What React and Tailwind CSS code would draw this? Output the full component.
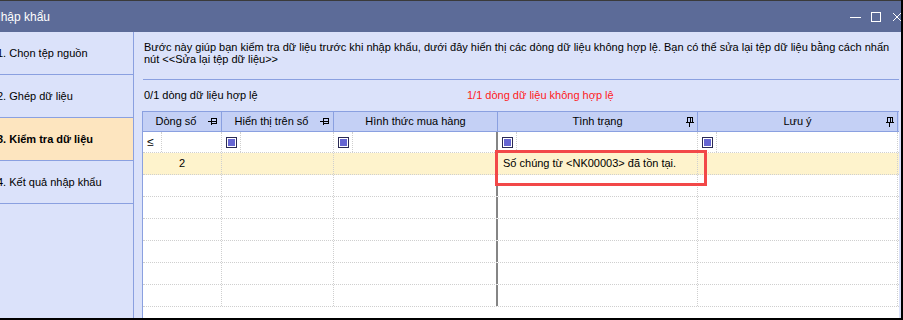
import React from "react";

const HPin = () => (
  <svg width="10" height="8" viewBox="0 0 10 8" className="block">
    <path d="M0 4.5H3.5M3.5 0.5V7.5M3.5 1.5H8.5V6.5H3.5M3.5 4.5H8.5" stroke="#000" strokeWidth="1" fill="none" shapeRendering="crispEdges" />
  </svg>
);

const VPin = () => (
  <svg width="8" height="10" viewBox="0 0 8 10" className="block">
    <path d="M1.5 0.5H6.5V5.5H1.5ZM4.5 0.5V5.5M0 5.5H8M3.5 5.5V10" stroke="#000" strokeWidth="1" fill="none" shapeRendering="crispEdges" />
  </svg>
);

const FilterBox = () => (
  <div className="w-[11px] h-[11px] border border-[#2b2b55] bg-white flex items-center justify-center">
    <div className="w-[7px] h-[7px] bg-[#6565d2]" />
  </div>
);

const cols = ["w-[79px]", "w-[112px]", "w-[164px]", "w-[200px]", "w-[200px]"];

function BodyRow({ yellow, children }) {
  return (
    <div className={`flex h-[22px] border-b border-dotted border-[#cfcfcf] ${yellow ? "bg-[#fef3cc]" : "bg-white"}`}>
      {cols.map((w, i) => (
        <div
          key={i}
          className={`${w} h-full shrink-0 flex items-center ${
            i === 2 ? "border-r-2 border-solid border-[#858585]" : "border-r border-dotted border-[#cfcfcf]"
          }`}
        >
          {children ? children[i] : null}
        </div>
      ))}
    </div>
  );
}

export default function App() {
  const font = { fontFamily: '"Liberation Sans", Arial, sans-serif' };
  return (
    <div
      className="w-[903px] h-[320px] overflow-hidden bg-[#dbe2fa] border-r-2 border-b-2 border-black text-[11px] text-black flex flex-col"
      style={font}
    >
      {/* Title bar */}
      <div className="h-[32px] shrink-0 bg-[#5c6b98] border-t border-[#3a3a3a] flex items-center text-white">
        <div className="-ml-[8px] text-[12px]">Nhập khẩu</div>
        <div className="ml-auto flex items-center h-full">
          <div className="w-[11px] h-px bg-white mr-[10px] mt-[1px]" />
          <div className="w-[10px] h-[10px] border border-white mr-[12px]" />
          <svg width="8" height="10" viewBox="0 0 8 10" className="block">
            <path d="M0 0L8 8M8 0L0 8" stroke="#fff" strokeWidth="1" transform="translate(0,1)" />
          </svg>
        </div>
      </div>

      <div className="flex flex-1 min-h-0">
        {/* Sidebar */}
        <div className="w-[134px] shrink-0 border-r border-[#8aa0e0] flex flex-col">
          <div className="h-[43px] border-b border-[#8aa0e0] flex items-center">
            <span className="-ml-[3px]">1. Chọn tệp nguồn</span>
          </div>
          <div className="h-[43px] border-b border-[#8aa0e0] flex items-center">
            <span className="-ml-[3px]">2. Ghép dữ liệu</span>
          </div>
          <div className="h-[43px] border-b border-[#8aa0e0] bg-[#fde5bf] flex items-center">
            <span className="-ml-[3px] font-bold">3. Kiểm tra dữ liệu</span>
          </div>
          <div className="h-[43px] border-b border-[#8aa0e0] flex items-center">
            <span className="-ml-[3px]">4. Kết quả nhập khẩu</span>
          </div>
        </div>

        {/* Content */}
        <div className="flex-1 min-w-0 pl-[8px] pr-[2px] pt-[9px] flex flex-col">
          <div className="pl-[2px] leading-[12px] whitespace-nowrap">
            Bước này giúp bạn kiểm tra dữ liệu trước khi nhập khẩu, dưới đây hiển thị các dòng dữ liệu không hợp lệ. Bạn có thể sửa lại tệp dữ liệu bằng cách nhấn
            <br />
            nút &lt;&lt;Sửa lại tệp dữ liệu&gt;&gt;
          </div>
          <div className="mt-[14px] h-px bg-[#8aa0e0] ml-[1px]" />
          <div className="mt-[9px] pl-[2px] flex leading-[12px] whitespace-nowrap">
            <span className="w-[323px] shrink-0">0/1 dòng dữ liệu hợp lệ</span>
            <span className="text-[#ff1a1a]">1/1 dòng dữ liệu không hợp lệ</span>
          </div>

          {/* Grid */}
          <div className="mt-[10px] relative flex-1 border-l border-t border-[#8aa0e0] bg-white w-[757px]">
            {/* header */}
            <div className="flex h-[20px] bg-[#c4d0f5] border-b border-[#8aa0e0]">
              {[
                { t: "Dòng số", pin: <HPin /> },
                { t: "Hiển thị trên sổ", pin: <HPin /> },
                { t: "Hình thức mua hàng" },
                { t: "Tình trạng", pin: <VPin /> },
                { t: "Lưu ý", pin: <VPin /> },
              ].map((c, i) => (
                <div key={i} className={`${cols[i]} shrink-0 relative flex items-center justify-center border-r border-[#8aa0e0]`}>
                  <span className={i < 2 ? "pr-[12px]" : ""}>{c.t}</span>
                  {c.pin && <div className="absolute right-[3px] top-[5px]">{c.pin}</div>}
                </div>
              ))}
            </div>
            {/* filter row */}
            <div className="flex h-[21px] bg-white border-b border-dotted border-[#cfcfcf]">
              {cols.map((w, i) => (
                <div
                  key={i}
                  className={`${w} shrink-0 flex ${
                    i === 2 ? "border-r-2 border-solid border-[#858585]" : "border-r border-dotted border-[#cfcfcf]"
                  }`}
                >
                  <div className="w-[19px] h-full border-r border-dotted border-[#cfcfcf] flex items-center justify-center">
                    {i === 0 ? (
                      <span className="text-[12px] leading-none -ml-[3px]">≤</span>
                    ) : (
                      <FilterBox />
                    )}
                  </div>
                </div>
              ))}
            </div>
            <BodyRow
              yellow
              children={[
                <span className="w-full text-right pr-[36px]">2</span>,
                null,
                null,
                <span className="pl-[5px]">Số chúng từ &lt;NK00003&gt; đã tồn tại.</span>,
                null,
              ]}
            />
            <BodyRow />
            <BodyRow />
            <BodyRow />
            <BodyRow />
            <BodyRow />
            <BodyRow />
            {/* red highlight box */}
            <div className="absolute left-[352px] top-[38px] w-[212px] h-[36px] border-[3px] border-[#f24848]" />
          </div>
        </div>
      </div>
    </div>
  );
}
